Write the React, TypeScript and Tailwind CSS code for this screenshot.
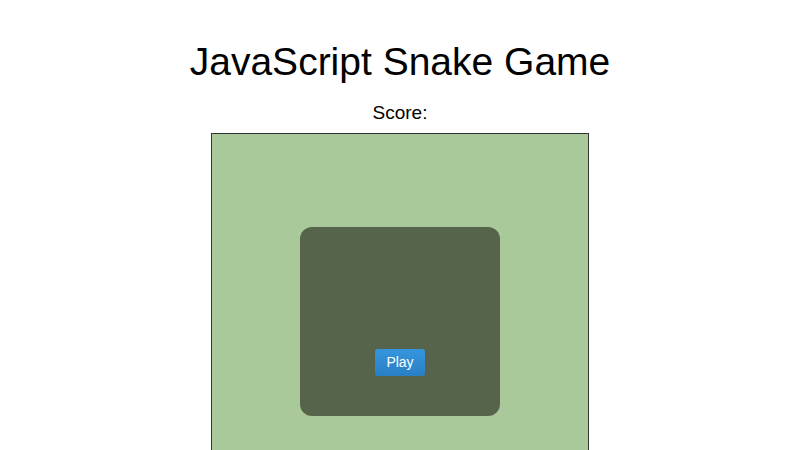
export default function App() {
  return (
    <main
      className="flex min-h-[450px] flex-col items-center bg-white pt-[42px] text-black"
      style={{ fontFamily: '"Liberation Sans", Arial, sans-serif' }}
    >
      <h1 className="text-[39px] leading-none font-normal">JavaScript Snake Game</h1>
      <p className="mt-[22px] text-[19px] leading-none">Score:</p>

      {/* Game board */}
      <div className="mt-[11px] flex h-[378px] w-[378px] shrink-0 items-center justify-center border border-[#333] bg-[#a9c99b]">
        <div className="mb-[2px] flex h-[189px] w-[200px] flex-col items-center rounded-[12px] bg-[#55644b] pt-[122px]">
          <button
            type="button"
            className="h-[27px] w-[50px] rounded-[3px] bg-gradient-to-b from-[#3596dd] to-[#2a7fc5] text-[14px] leading-none text-white"
          >
            Play
          </button>
        </div>
      </div>
    </main>
  )
}
